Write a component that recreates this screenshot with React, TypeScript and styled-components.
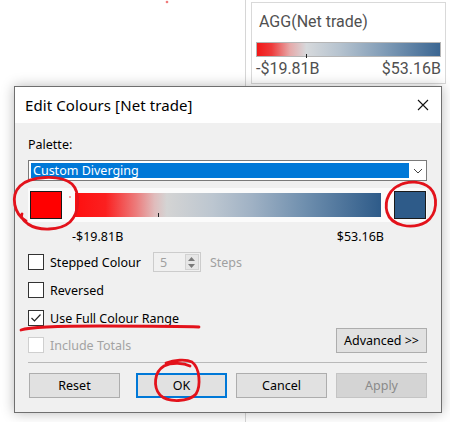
import React from "react";
import styled, { createGlobalStyle } from "styled-components";

const GlobalStyle = createGlobalStyle`
  html, body { margin: 0; padding: 0; background: #ffffff; }
  body { width: 450px; height: 422px; overflow: hidden; }
  * { box-sizing: border-box; }
`;

const Page = styled.div`
  position: relative;
  width: 450px;
  height: 422px;
  display: flex;
  background: #fff;
  overflow: hidden;
`;

const LeftPane = styled.div`
  width: 246px;
  height: 100%;
  border-right: 1px solid #d6d6d6;
`;

const RightPane = styled.div`
  flex: 1;
  padding: 2px 4px 0 5px;
`;

const LegendCard = styled.div`
  height: 82px;
  border: 1px solid #d9d9d9;
  padding: 9px 4px 0 4px;
  font-family: Roboto, "Liberation Sans", sans-serif;
  color: #505050;
`;

const LegendTitle = styled.div`
  font-size: 16px;
  line-height: 20px;
  padding-left: 3px;
`;

const LegendBar = styled.div`
  position: relative;
  margin-top: 10px;
  height: 15px;
  border: 1px solid #b5b5b5;
  background: linear-gradient(
    to right,
    #f21717 0%,
    #ee3b3b 8%,
    #e6a9a9 18%,
    #d6d9dc 27%,
    #b6c3cf 45%,
    #7f9bb6 70%,
    #3b6692 100%
  );
`;

const Tick = styled.span<{ $left: number; $bottom: number }>`
  position: absolute;
  left: ${(p) => p.$left}px;
  bottom: ${(p) => p.$bottom}px;
  width: 1px;
  height: 4px;
  background: #222;
`;

const LegendLabels = styled.div`
  display: flex;
  justify-content: space-between;
  margin-top: 3px;
  font-size: 16px;
  line-height: 18px;
`;

const Dialog = styled.div`
  position: absolute;
  left: 14px;
  top: 86px;
  width: 428px;
  height: 327px;
  border: 1px solid #6f6f6f;
  background: #f0f0f0;
  box-shadow: 0 0 12px rgba(0, 0, 0, 0.28);
  font-family: "Noto Sans", "Open Sans", sans-serif;
  font-size: 12.5px;
  color: #000;
  display: flex;
  flex-direction: column;
`;

const TitleBar = styled.div`
  height: 36px;
  background: #fff;
  display: flex;
  align-items: center;
  justify-content: space-between;
  padding: 0 12px 0 10px;
`;

const Title = styled.div`
  font-size: 15px;
  letter-spacing: 0.1px;
`;

const CloseIcon = styled.svg`
  width: 12px;
  height: 12px;
`;

const Body = styled.div`
  flex: 1;
  display: flex;
  flex-direction: column;
  padding: 14px 14px 0 13px;
`;

const LabelLine = styled.div`
  height: 16px;
  line-height: 16px;
`;

const Select = styled.div`
  margin-top: 7px;
  height: 21px;
  border: 1px solid #7a7a7a;
  background: #fff;
  display: flex;
  align-items: center;
  padding: 0 0 0 2px;
`;

const SelectedValue = styled.div`
  flex: 1;
  height: 15px;
  line-height: 15px;
  background: #0078d7;
  color: #fff;
  padding-left: 2px;
`;

const Chevron = styled.svg`
  width: 17px;
  height: 10px;
  flex: none;
`;

const ColourRow = styled.div`
  margin-top: 7px;
  height: 34px;
  background: #fbfbfb;
  display: flex;
  align-items: center;
  padding-left: 2px;
`;

const Swatch = styled.div<{ $color: string }>`
  width: 32px;
  height: 28px;
  flex: none;
  background: ${(p) => p.$color};
  border: 1px solid #1a1a1a;
`;

const Dot = styled.span`
  position: absolute;
  left: 38px;
  top: 6px;
  width: 2px;
  height: 2px;
  border-radius: 1px;
  background: #f08a8a;
`;

const GradientBox = styled.div`
  position: relative;
  flex: none;
  width: 306px;
  height: 24px;
  margin: 0 13px;
  background: linear-gradient(
    to right,
    #ff0f0f 0%,
    #fb2020 10%,
    #ec7c7c 20%,
    #e0bcbc 26%,
    #d4d4d4 30%,
    #bcc6d0 45%,
    #9fb1c4 58%,
    #6f8fae 75%,
    #2e5b89 100%
  );
`;

const RangeLabels = styled.div`
  margin-top: 7px;
  height: 16px;
  line-height: 16px;
  display: flex;
  justify-content: space-between;
  padding: 0 43px 0 44px;
`;

const OptionRow = styled.div<{ $gap: number; $height?: number }>`
  margin-top: ${(p) => p.$gap}px;
  height: ${(p) => p.$height ?? 20}px;
  display: flex;
  align-items: center;
`;

const CheckItem = styled.label<{ $disabled?: boolean }>`
  display: flex;
  align-items: center;
  height: 16px;
  color: ${(p) => (p.$disabled ? "#a3a3a3" : "#000")};
`;

const Box = styled.span<{ $disabled?: boolean }>`
  width: 16px;
  height: 16px;
  flex: none;
  border: 1px solid ${(p) => (p.$disabled ? "#cfcfcf" : "#333")};
  background: #fff;
  margin-right: 6px;
  display: flex;
  align-items: center;
  justify-content: center;
`;

const Spin = styled.div`
  margin-left: 12px;
  width: 48px;
  height: 20px;
  border: 1px solid #cccccc;
  background: #f0f0f0;
  display: flex;
  align-items: center;
  color: #a0a0a0;
`;

const SpinValue = styled.span`
  flex: 1;
  padding-left: 6px;
`;

const SpinButtons = styled.div`
  width: 14px;
  height: 16px;
  margin-right: 1px;
  display: flex;
  flex-direction: column;
  background: #e6e6e6;
  border: 1px solid #d2d2d2;
`;

const SpinHalf = styled.div`
  flex: 1;
  display: flex;
  align-items: center;
  justify-content: center;
`;

const MutedText = styled.span`
  margin-left: 9px;
  color: #a0a0a0;
`;

const BottomOptionRow = styled.div`
  height: 25px;
  display: flex;
  align-items: flex-end;
  justify-content: space-between;
`;

const Separator = styled.div`
  margin-top: 9px;
  height: 1px;
  background: #b9b9b9;
`;

const ButtonRow = styled.div`
  margin-top: 10px;
  height: 25px;
  display: flex;
  gap: 9px;
  padding-left: 1px;
`;

const Button = styled.div<{ $variant?: "default" | "primary" | "disabled"; $after?: number }>`
  width: 91px;
  height: 25px;
  margin-right: ${(p) => p.$after ?? 0}px;
  display: flex;
  align-items: center;
  justify-content: center;
  background: ${(p) => (p.$variant === "disabled" ? "#d4d4d4" : "#e1e1e1")};
  border: ${(p) =>
    p.$variant === "primary"
      ? "2px solid #0078d7"
      : p.$variant === "disabled"
      ? "1px solid #c4c4c4"
      : "1px solid #adadad"};
  color: ${(p) => (p.$variant === "disabled" ? "#8a8a8a" : "#000")};
`;

const Annotations = styled.svg`
  position: absolute;
  left: 0;
  top: 0;
  width: 450px;
  height: 422px;
  pointer-events: none;
`;

const Check = () => (
  <svg width="12" height="10" viewBox="0 0 12 10">
    <path d="M1.5 5 L4.5 8 L10.5 1.5" fill="none" stroke="#222" strokeWidth="1.2" />
  </svg>
);

const CheckBox: React.FC<{ label: string; checked?: boolean; disabled?: boolean }> = ({
  label,
  checked,
  disabled,
}) => (
  <CheckItem $disabled={disabled}>
    <Box $disabled={disabled}>{checked && <Check />}</Box>
    {label}
  </CheckItem>
);

export default function App() {
  return (
    <>
      <GlobalStyle />
      <Page>
        <LeftPane />
        <RightPane>
          <LegendCard>
            <LegendTitle>AGG(Net trade)</LegendTitle>
            <LegendBar>
              <Tick $left={49} $bottom={-2} />
            </LegendBar>
            <LegendLabels>
              <span>-$19.81B</span>
              <span>$53.16B</span>
            </LegendLabels>
          </LegendCard>
        </RightPane>

        <Dialog>
          <TitleBar>
            <Title>Edit Colours [Net trade]</Title>
            <CloseIcon viewBox="0 0 12 12">
              <path d="M1 1 L11 11 M11 1 L1 11" stroke="#111" strokeWidth="1.1" />
            </CloseIcon>
          </TitleBar>
          <Body>
            <LabelLine>Palette:</LabelLine>
            <Select>
              <SelectedValue>Custom Diverging</SelectedValue>
              <Chevron viewBox="0 0 17 10">
                <path d="M5 3 L9 7 L13 3" fill="none" stroke="#444" strokeWidth="1" />
              </Chevron>
            </Select>
            <ColourRow>
              <Swatch $color="#ff0000" />
              <GradientBox>
                <Dot style={{ left: -6, top: 3 }} />
                <Tick $left={83} $bottom={0} />
              </GradientBox>
              <Swatch $color="#2e5b89" />
            </ColourRow>
            <RangeLabels>
              <span>-$19.81B</span>
              <span>$53.16B</span>
            </RangeLabels>
            <OptionRow $gap={7}>
              <CheckBox label="Stepped Colour" />
              <Spin>
                <SpinValue>5</SpinValue>
                <SpinButtons>
                  <SpinHalf>
                    <svg width="7" height="4" viewBox="0 0 7 4">
                      <path d="M0 4 L3.5 0 L7 4 Z" fill="#7a7a7a" />
                    </svg>
                  </SpinHalf>
                  <SpinHalf>
                    <svg width="7" height="4" viewBox="0 0 7 4">
                      <path d="M0 0 L3.5 4 L7 0 Z" fill="#7a7a7a" />
                    </svg>
                  </SpinHalf>
                </SpinButtons>
              </Spin>
              <MutedText>Steps</MutedText>
            </OptionRow>
            <OptionRow $gap={8}>
              <CheckBox label="Reversed" />
            </OptionRow>
            <OptionRow $gap={8}>
              <CheckBox label="Use Full Colour Range" checked />
            </OptionRow>
            <BottomOptionRow>
              <CheckBox label="Include Totals" disabled />
              <Button>Advanced &gt;&gt;</Button>
            </BottomOptionRow>
            <Separator />
            <ButtonRow>
              <Button $after={7}>Reset</Button>
              <Button $variant="primary">OK</Button>
              <Button>Cancel</Button>
              <Button $variant="disabled">Apply</Button>
            </ButtonRow>
          </Body>
        </Dialog>

        <Annotations viewBox="0 0 450 422">
          <g fill="none" stroke="#e3121b" strokeWidth="2.8" strokeLinecap="round" strokeLinejoin="round">
            <circle cx="167" cy="2" r="0.6" strokeWidth="1.5" stroke="#f07a7a" />
            <path d="M26 221 C 14 214, 10 196, 20 186 C 30 176, 60 174, 72 184 C 80 192, 80 212, 70 222 C 60 231, 38 231, 28 224 C 24 221, 20 217, 22 214" />
            <path d="M402 184 C 390 188, 384 200, 387 212 C 391 226, 412 230, 426 222 C 438 214, 438 196, 430 188 C 422 181, 408 180, 398 186" />
            <path d="M21 330 C 30 327, 60 326, 100 326 C 140 326, 180 326, 199 327" />
            <path d="M166 363 C 174 360, 186 359, 192 362 C 200 368, 201 386, 196 394 C 189 402, 168 403, 160 395 C 153 387, 154 372, 164 366 C 172 362, 184 363, 190 366" />
          </g>
        </Annotations>
      </Page>
    </>
  );
}
